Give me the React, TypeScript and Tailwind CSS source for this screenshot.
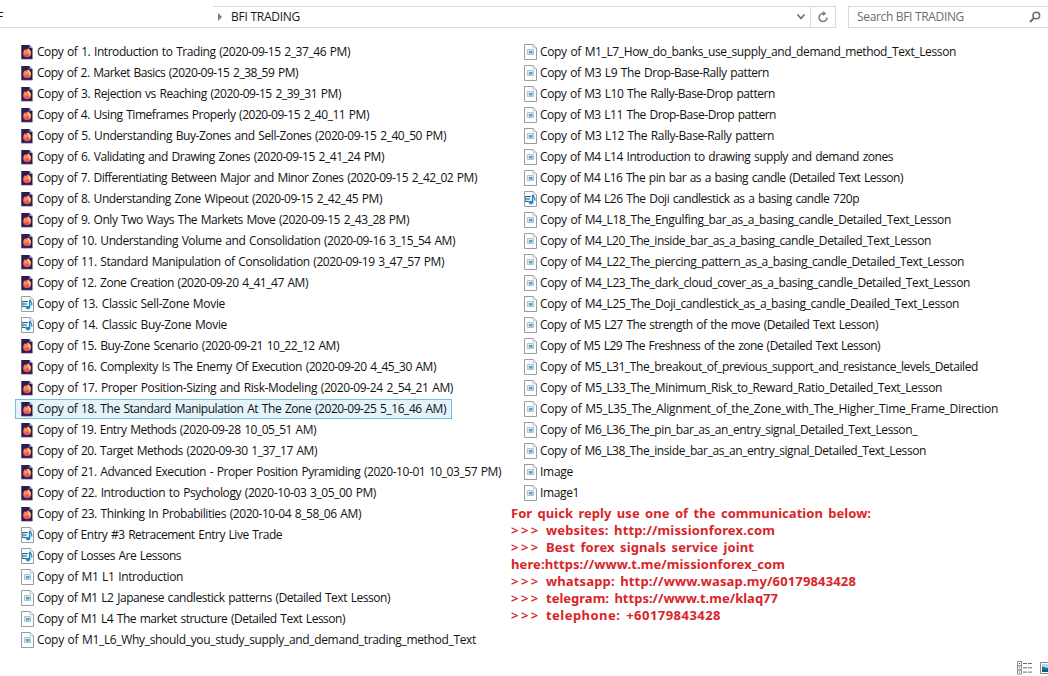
import { useLayoutEffect, useRef, useState } from "react";

type Kind = "video" | "media" | "image";

type Entry = {
  name: string;
  kind: Kind;
  width: number;
  selected?: boolean;
};

const lessons: Entry[] = [
  { name: "Copy of 1. Introduction to Trading (2020-09-15 2_37_46 PM)", kind: "video", width: 313 },
  { name: "Copy of 2. Market Basics (2020-09-15 2_38_59 PM)", kind: "video", width: 261 },
  { name: "Copy of 3. Rejection vs Reaching (2020-09-15 2_39_31 PM)", kind: "video", width: 304 },
  { name: "Copy of 4. Using Timeframes Properly (2020-09-15 2_40_11 PM)", kind: "video", width: 332 },
  { name: "Copy of 5. Understanding Buy-Zones and Sell-Zones (2020-09-15 2_40_50 PM)", kind: "video", width: 409 },
  { name: "Copy of 6. Validating and Drawing Zones (2020-09-15 2_41_24 PM)", kind: "video", width: 347 },
  { name: "Copy of 7. Differentiating Between Major and Minor Zones (2020-09-15 2_42_02 PM)", kind: "video", width: 440 },
  { name: "Copy of 8. Understanding Zone Wipeout (2020-09-15 2_42_45 PM)", kind: "video", width: 345 },
  { name: "Copy of 9. Only Two Ways The Markets Move (2020-09-15 2_43_28 PM)", kind: "video", width: 372 },
  { name: "Copy of 10. Understanding Volume and Consolidation (2020-09-16 3_15_54 AM)", kind: "video", width: 418 },
  { name: "Copy of 11. Standard Manipulation of Consolidation (2020-09-19 3_47_57 PM)", kind: "video", width: 407 },
  { name: "Copy of 12. Zone Creation (2020-09-20 4_41_47 AM)", kind: "video", width: 271 },
  { name: "Copy of 13. Classic Sell-Zone Movie", kind: "media", width: 188 },
  { name: "Copy of 14. Classic Buy-Zone Movie", kind: "media", width: 190 },
  { name: "Copy of 15. Buy-Zone Scenario (2020-09-21 10_22_12 AM)", kind: "video", width: 302 },
  { name: "Copy of 16. Complexity Is The Enemy Of Execution (2020-09-20 4_45_30 AM)", kind: "video", width: 399 },
  { name: "Copy of 17. Proper Position-Sizing and Risk-Modeling (2020-09-24 2_54_21 AM)", kind: "video", width: 416 },
  { name: "Copy of 18. The Standard Manipulation At The Zone (2020-09-25 5_16_46 AM)", kind: "video", width: 409, selected: true },
  { name: "Copy of 19. Entry Methods (2020-09-28 10_05_51 AM)", kind: "video", width: 279 },
  { name: "Copy of 20. Target Methods (2020-09-30 1_37_17 AM)", kind: "video", width: 280 },
  { name: "Copy of 21. Advanced Execution - Proper Position Pyramiding (2020-10-01 10_03_57 PM)", kind: "video", width: 464 },
  { name: "Copy of 22. Introduction to Psychology (2020-10-03 3_05_00 PM)", kind: "video", width: 339 },
  { name: "Copy of 23. Thinking In Probabilities (2020-10-04 8_58_06 AM)", kind: "video", width: 324 },
  { name: "Copy of Entry #3 Retracement Entry Live Trade", kind: "media", width: 245 },
  { name: "Copy of Losses Are Lessons", kind: "media", width: 144 },
  { name: "Copy of M1 L1 Introduction", kind: "image", width: 146 },
  { name: "Copy of M1 L2 Japanese candlestick patterns (Detailed Text Lesson)", kind: "image", width: 353 },
  { name: "Copy of M1 L4 The market structure (Detailed Text Lesson)", kind: "image", width: 308 },
  { name: "Copy of M1_L6_Why_should_you_study_supply_and_demand_trading_method_Text", kind: "image", width: 439 },
];

const textLessons: Entry[] = [
  { name: "Copy of M1_L7_How_do_banks_use_supply_and_demand_method_Text_Lesson", kind: "image", width: 416 },
  { name: "Copy of M3 L9 The Drop-Base-Rally pattern", kind: "image", width: 229 },
  { name: "Copy of M3 L10 The Rally-Base-Drop pattern", kind: "image", width: 235 },
  { name: "Copy of M3 L11 The Drop-Base-Drop pattern", kind: "image", width: 236 },
  { name: "Copy of M3 L12 The Rally-Base-Rally pattern", kind: "image", width: 234 },
  { name: "Copy of M4 L14 Introduction to drawing supply and demand zones", kind: "image", width: 353 },
  { name: "Copy of M4 L16 The pin bar as a basing candle (Detailed Text Lesson)", kind: "image", width: 363 },
  { name: "Copy of M4 L26 The Doji candlestick as a basing candle 720p", kind: "media", width: 319 },
  { name: "Copy of M4_L18_The_Engulfing_bar_as_a_basing_candle_Detailed_Text_Lesson", kind: "image", width: 411 },
  { name: "Copy of M4_L20_The_inside_bar_as_a_basing_candle_Detailed_Text_Lesson", kind: "image", width: 391 },
  { name: "Copy of M4_L22_The_piercing_pattern_as_a_basing_candle_Detailed_Text_Lesson", kind: "image", width: 424 },
  { name: "Copy of M4_L23_The_dark_cloud_cover_as_a_basing_candle_Detailed_Text_Lesson", kind: "image", width: 430 },
  { name: "Copy of M4_L25_The_Doji_candlestick_as_a_basing_candle_Deailed_Text_Lesson", kind: "image", width: 419 },
  { name: "Copy of M5 L27 The strength of the move (Detailed Text Lesson)", kind: "image", width: 338 },
  { name: "Copy of M5 L29 The Freshness of the zone (Detailed Text Lesson)", kind: "image", width: 340 },
  { name: "Copy of M5_L31_The_breakout_of_previous_support_and_resistance_levels_Detailed", kind: "image", width: 438 },
  { name: "Copy of M5_L33_The_Minimum_Risk_to_Reward_Ratio_Detailed_Text_Lesson", kind: "image", width: 402 },
  { name: "Copy of M5_L35_The_Alignment_of_the_Zone_with_The_Higher_Time_Frame_Direction", kind: "image", width: 458 },
  { name: "Copy of M6_L36_The_pin_bar_as_an_entry_signal_Detailed_Text_Lesson_", kind: "image", width: 377 },
  { name: "Copy of M6_L38_The_inside_bar_as_an_entry_signal_Detailed_Text_Lesson", kind: "image", width: 386 },
  { name: "Image", kind: "image", width: 33 },
  { name: "Image1", kind: "image", width: 39 },
];

const contacts = [
  { arrows: false, text: "For quick reply use one of the communication below:", width: 360 },
  { arrows: true, text: "websites: http://missionforex.com", width: 229 },
  { arrows: true, text: "Best forex signals service joint", width: 208 },
  { arrows: false, text: "here:https://www.t.me/missionforex_com", width: 274 },
  { arrows: true, text: "whatsapp: http://www.wasap.my/60179843428", width: 310 },
  { arrows: true, text: "telegram: https://www.t.me/klaq77", width: 232 },
  { arrows: true, text: "telephone: +60179843428", width: 175 },
];

// Spreads the letters so that the line takes exactly the given width.
function FitText({ text, width }: { text: string; width: number }) {
  const ref = useRef<HTMLSpanElement>(null);
  const [spacing, setSpacing] = useState(0);

  useLayoutEffect(() => {
    if (!ref.current) return;
    const natural = ref.current.getBoundingClientRect().width;
    setSpacing((width - natural) / text.length);
  }, [text, width]);

  return (
    <span ref={ref} className="whitespace-pre" style={{ letterSpacing: spacing }}>
      {text}
    </span>
  );
}

function VideoIcon() {
  return (
    <svg width="12" height="16" viewBox="0 0 12 16" className="mr-1 shrink-0">
      <path d="M.5 1h8L11.5 4v11H.5z" fill="#2c1d50" />
      <path d="M8.5 1v3h3z" fill="#a197c2" />
      <path d="M.5 1v14h11" fill="none" stroke="#51467a" strokeWidth=".7" />
      <circle cx="6" cy="9.2" r="4" fill="#e8505a" />
      <path d="M3 8C3.2 6.5 3.6 5.8 4 5.2c.1 1 .7 1.3 1.5 1.7C5.8 5.3 7 4.4 7.5 4.2c.2 1.5 2.4 2.4 2.5 4.8 0 1.6-1.2 3-2.4 3.5 1-2-.3-3.6-2-3.1-1 .3-1.2 1.2-.6 2.2C3.8 10.8 3 9.5 3 8z" fill="#fb9058" />
      <path d="M6.8 5c2.3.8 3.2 3 2.2 5C8.5 8 7 7.5 6.8 5z" fill="#ffd684" />
    </svg>
  );
}

function Sheet({ children }: { children: React.ReactNode }) {
  return (
    <svg width="13" height="16" viewBox="0 0 13 16" className="mr-[3px] shrink-0">
      <path d="M.5.5h8.7l3.3 3.3v11.7H.5z" fill="#fcfdfd" stroke="#989d9f" />
      <path d="M9.2.5v3.3h3.3" fill="#eef0f1" stroke="#b0b4b6" strokeWidth=".8" />
      {children}
    </svg>
  );
}

function FileIcon({ kind }: { kind: Kind }) {
  if (kind === "video") return <VideoIcon />;
  if (kind === "media") {
    return (
      <Sheet>
        <path d="M1 5h5.5v6H1z" fill="#dcecf5" />
        <path d="M1.3 5.5h5.5M1.3 8h4.5M1.3 10.5h3.5" stroke="#285a7c" strokeWidth="1.1" />
        <path d="M1.6 5v6" stroke="#4a7f9f" strokeWidth=".8" />
        <path d="M8.6 4v8" stroke="#1483bb" strokeWidth="1.4" />
        <path d="M8.8 4c.3 1.8 3 2.2 2 5.6" fill="none" stroke="#1483bb" strokeWidth="1.3" />
        <ellipse cx="7" cy="11.6" rx="2.3" ry="1.8" fill="#1692ca" />
      </Sheet>
    );
  }
  return (
    <Sheet>
      <path d="M3.5 5.5h6v5h-6z" fill="#d4e9f2" stroke="#a9c6d3" />
      <path d="M5 7h3.5v2.5H5z" fill="#5f9fbc" />
    </Sheet>
  );
}

function FileRow({ entry }: { entry: Entry }) {
  return (
    <li className="flex h-[21px] items-center">
      <div
        className={
          entry.selected
            ? "flex h-5 items-center border border-[#70c0e7] bg-[#e5f3fb] pl-[5px] pr-[5px]"
            : "flex h-5 items-center border border-transparent pl-[5px]"
        }
      >
        <FileIcon kind={entry.kind} />
        <div className="flex pt-px [word-spacing:1px]">
          <FitText text={entry.name} width={entry.width} />
        </div>
      </div>
    </li>
  );
}

function AddressBar() {
  return (
    <header className="flex h-[22px] shrink-0 text-xs leading-5 text-[#1a1a1a]">
      <div className="w-[213px] border-b border-[#d9d9d9]">
        <span className="-ml-[3px] block pt-px">F</span>
      </div>
      <div className="flex w-[598px] items-center border-y border-[#d9d9d9] pl-1 pr-[5px]">
        <svg width="6" height="8" viewBox="0 0 6 8" className="mr-2">
          <path d="M1 0l4 4-4 4z" fill="#7b7b7b" />
        </svg>
        <FitText text="BFI TRADING" width={69} />
        <svg width="10" height="8" viewBox="0 0 10 8" className="ml-auto">
          <path d="M1.5 1.5L5 5.5l3.5-4" fill="none" stroke="#747474" strokeWidth="1.8" />
        </svg>
      </div>
      <div className="-ml-px flex w-[26px] items-center justify-center border border-[#d9d9d9]">
        <svg width="12" height="12" viewBox="0 0 12 12">
          <path d="M7 2.6A4 4 0 1 0 10 6.4" fill="none" stroke="#7c7c7c" strokeWidth="1.5" />
          <path d="M5.8 0v5l3.6-2.4z" fill="#7c7c7c" />
        </svg>
      </div>
      <div className="ml-3 flex flex-1 items-center border-y border-l border-[#d9d9d9] pl-2 pr-[7px] text-[#6d6d6d]">
        <FitText text="Search BFI TRADING" width={107} />
        <svg width="12" height="12" viewBox="0 0 12 12" className="ml-auto">
          <circle cx="7.3" cy="4.5" r="3.3" fill="none" stroke="#6e6e6e" strokeWidth="1.6" />
          <path d="M5 7L1 11" stroke="#6e6e6e" strokeWidth="2" />
        </svg>
      </div>
    </header>
  );
}

function ViewSwitch() {
  return (
    <footer className="mt-auto flex h-[17px] shrink-0 justify-end gap-[7px] overflow-hidden">
      <svg width="16" height="14" viewBox="0 0 16 14" className="mt-0.5">
        {[0, 1, 2].map((i) => (
          <g key={i} transform={`translate(0 ${i * 4.3})`}>
            <path d="M.5.5h4v4h-4z" fill="#fff" stroke="#8b8b8b" />
            <path d="M2 2h1v1H2z" fill="#555" />
            <path d="M6 2.5h4M11 2.5h4" stroke="#6c6c6c" />
          </g>
        ))}
      </svg>
      <svg width="8" height="12" viewBox="0 0 8 12" className="mt-[3px]">
        <path d="M8 .5H.5v11H8" fill="#fff" stroke="#848484" />
        <path d="M2 2h6v4H2z" fill="#a9d8f5" />
        <path d="M2 5c2-1 3 1 6 1v4H2z" fill="#18738c" />
        <path d="M2 8h6v2H2z" fill="#185183" />
      </svg>
    </footer>
  );
}

export default function App() {
  return (
    <div className="flex h-[676px] w-[1048px] flex-col overflow-hidden bg-white pt-1.5 font-['Open_Sans','Noto_Sans',sans-serif]">
      <AddressBar />
      <main className="flex pt-[13px] text-xs leading-5 text-[#111]">
        <ul className="w-[518px] shrink-0 pl-[15px]">
          {lessons.map((entry) => (
            <FileRow key={entry.name} entry={entry} />
          ))}
        </ul>
        <div>
          <ul>
            {textLessons.map((entry) => (
              <FileRow key={entry.name} entry={entry} />
            ))}
          </ul>
          <div className="-ml-[7px] pt-0.5 font-['Noto_Sans','Open_Sans',sans-serif] text-[13px] font-bold leading-[17px] text-[#d9252a] [word-spacing:2px]">
            {contacts.map((line) => (
              <p key={line.text} className="flex">
                {line.arrows && (
                  <span className="w-[35px] text-[13px] font-semibold tracking-[2.5px]">&gt;&gt;&gt;</span>
                )}
                <FitText text={line.text} width={line.width} />
              </p>
            ))}
          </div>
        </div>
      </main>
      <ViewSwitch />
    </div>
  );
}
